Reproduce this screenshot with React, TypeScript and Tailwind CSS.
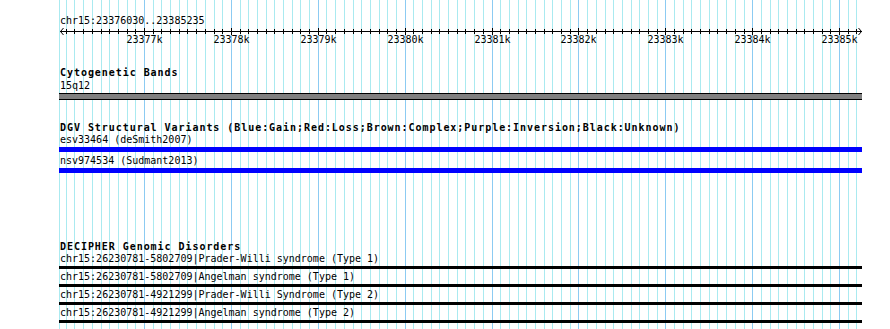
import React from "react";

const BP0 = 23377000;
const X0 = 144;
const SCALE = 0.08689;
const LEFT = 59;
const xOf = (bp: number) => X0 + (bp - BP0) * SCALE;

const gridLines: { x: number; major: boolean }[] = [{ x: 59, major: false }];
for (let bp = 23376100; bp <= 23385200; bp += 100) {
  gridLines.push({ x: Math.round(xOf(bp)), major: bp % 1000 === 0 });
}
const majors = [23377, 23378, 23379, 23380, 23381, 23382, 23383, 23384, 23385];

const decipher = [
  "chr15:26230781-5802709|Prader-Willi syndrome (Type 1)",
  "chr15:26230781-5802709|Angelman syndrome (Type 1)",
  "chr15:26230781-4921299|Prader-Willi Syndrome (Type 2)",
  "chr15:26230781-4921299|Angelman syndrome (Type 2)",
];

const mono = { fontFamily: '"DejaVu Sans Mono", "Liberation Mono", monospace' };

function Label({ children, bold = false }: { children: React.ReactNode; bold?: boolean }) {
  return (
    <div
      className={
        "pl-px h-[12px] leading-[12px] text-[10px] text-black whitespace-nowrap " +
        (bold ? "font-bold tracking-[0.95px]" : "")
      }
    >
      {children}
    </div>
  );
}

function Ruler() {
  const w = 862 - LEFT;
  return (
    <div className="relative h-[20px] w-[803px]">
      <svg width={w} height={20} className="block" shapeRendering="crispEdges">
        <rect x={1} y={4} width={802} height={1} fill="#000" />
        {gridLines.slice(1).map((g, i) => (
          <rect
            key={i}
            x={g.x - LEFT}
            y={g.major ? 1 : 2}
            width={1}
            height={g.major ? 7 : 5}
            fill="#000"
          />
        ))}
        <polyline points="4.5,1 1.5,4.5 4.5,8" fill="none" stroke="#000" strokeWidth={1} shapeRendering="auto" />
        <polyline points="799.5,1 802.5,4.5 799.5,8" fill="none" stroke="#000" strokeWidth={1} shapeRendering="auto" />
      </svg>
      {majors.map((k) => (
        <span
          key={k}
          className="absolute top-[7px] h-[12px] leading-[12px] text-[10px] text-black whitespace-nowrap w-[36px] text-center"
          style={{ left: Math.round(xOf(k * 1000)) - LEFT - 18 + 0.5 }}
        >
          {k}k
        </span>
      ))}
    </div>
  );
}

export default function App() {
  return (
    <div className="relative w-[890px] h-[329px] bg-white overflow-hidden" style={mono}>
      <svg
        className="absolute inset-0"
        width={890}
        height={329}
        shapeRendering="crispEdges"
      >
        {gridLines.map((g, i) => (
          <rect key={i} x={g.x} y={0} width={1} height={329} fill={g.major ? "#8ccbf2" : "#aaeaf0"} />
        ))}
      </svg>
      <div className="relative pl-[59px] w-[862px] pt-[15px]">
        <Label>chr15:23376030..23385235</Label>
        <Ruler />

        <div className="mt-[20px]">
          <Label bold>Cytogenetic Bands</Label>
        </div>
        <div className="mt-px">
          <Label>15q12</Label>
        </div>
        <div className="mt-px h-[7px] w-[803px] border-y border-black bg-[#808080]" />

        <div className="mt-[22px]">
          <Label bold>DGV Structural Variants (Blue:Gain;Red:Loss;Brown:Complex;Purple:Inversion;Black:Unknown)</Label>
        </div>
        <Label>esv33464 (deSmith2007)</Label>
        <div className="mt-px h-[5px] w-[803px] bg-[#0000ff]" />
        <div className="mt-[3px]">
          <Label>nsv974534 (Sudmant2013)</Label>
        </div>
        <div className="mt-px h-[5px] w-[803px] bg-[#0000ff]" />

        <div className="mt-[68px]">
          <Label bold>DECIPHER Genomic Disorders</Label>
        </div>
        {decipher.map((d, i) => (
          <div key={i} className={i === 0 ? "" : "mt-[2px]"}>
            <Label>{d}</Label>
            <div className="mt-px h-[3px] w-[803px] bg-black" />
          </div>
        ))}
      </div>
    </div>
  );
}
